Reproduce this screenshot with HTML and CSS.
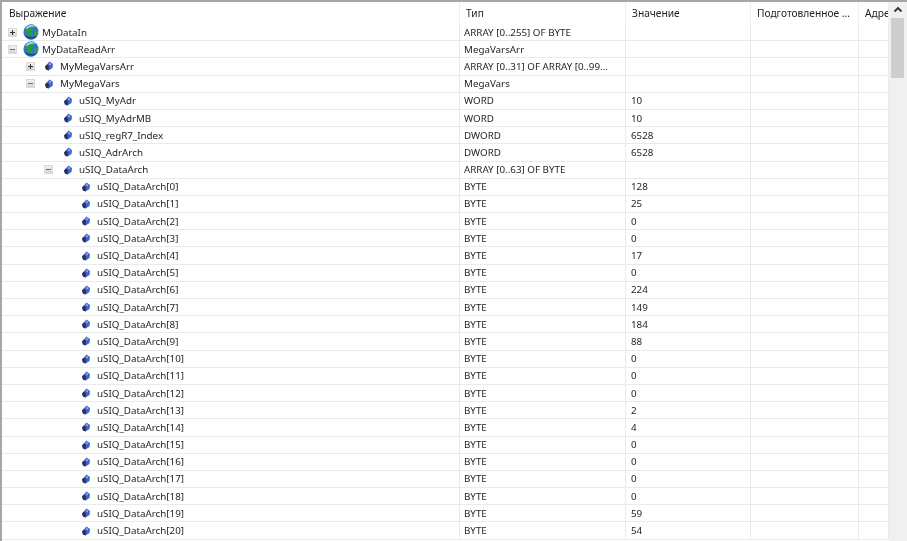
FILE: index.html
```html
<!DOCTYPE html>
<html lang="ru">
<head>
<meta charset="utf-8">
<title>Watch</title>
<link rel="stylesheet" href="styles.css">
</head>
<body>
<svg class="defs" width="0" height="0" aria-hidden="true">
  <defs>
    <symbol id="glob" viewBox="0 0 16 16">
      <ellipse cx="8" cy="8" rx="7.400" ry="7.800" transform="rotate(25 8 8)" fill="#2a78c6"/>
      <path d="M2.500 6 6 2.500 10 2 10.500 5.500 8 7.500 9.500 10.500 7 14 5 11 5 8.500 2.500 8Z" fill="#2f9a44"/>
      <path d="M11 8 14.500 6.500 14.500 10 11.500 12.500Z" fill="#3fa03f"/>
      <path d="M3.500 3C6 .3 11 .2 13.500 3 10.500 1.800 6.500 2.500 3 5.500Z" fill="#a9dcf7"/>
      <path d="M1.200 10.500C3.500 15 11 16.500 14.500 11.500 11 14 5 14 1.200 10.500Z" fill="#0f3c80"/>
    </symbol>
    <symbol id="var" viewBox="0 0 16 16">
      <path d="M4 8.500 8.500 3.500 12 6 11.500 10 7.500 12.500 5 11.500Z" fill="#3f62cc"/>
      <path d="M4 8.500 6 6.500 8 8.500 7.500 12.500 5 11.500Z" fill="#2b3152"/>
      <path d="M8.500 4.500 10.500 6 9.500 7.500 8 6.500Z" fill="#8ea6ea"/>
    </symbol>
  </defs>
</svg>
<main class="watch">
  <div class="table">
    <div class="head">
      <div class="hcell">Выражение</div>
      <div class="hcell">Тип</div>
      <div class="hcell">Значение</div>
      <div class="hcell">Подготовленное ...</div>
      <div class="hcell">Адре</div>
    </div>
    <div class="row"><div class="name l0"><span class="exp plus"></span><svg class="ico"><use href="#glob"/></svg><span>MyDataIn</span></div><div class="cell">ARRAY [0..255] OF BYTE</div><div class="cell"></div><div class="cell"></div><div class="cell"></div></div>
    <div class="row"><div class="name l0"><span class="exp minus"></span><svg class="ico"><use href="#glob"/></svg><span>MyDataReadArr</span></div><div class="cell">MegaVarsArr</div><div class="cell"></div><div class="cell"></div><div class="cell"></div></div>
    <div class="row"><div class="name l1"><span class="exp plus"></span><svg class="ico"><use href="#var"/></svg><span>MyMegaVarsArr</span></div><div class="cell">ARRAY [0..31] OF ARRAY [0..99...</div><div class="cell"></div><div class="cell"></div><div class="cell"></div></div>
    <div class="row"><div class="name l1"><span class="exp minus"></span><svg class="ico"><use href="#var"/></svg><span>MyMegaVars</span></div><div class="cell">MegaVars</div><div class="cell"></div><div class="cell"></div><div class="cell"></div></div>
    <div class="row"><div class="name l2"><span class="exp"></span><svg class="ico"><use href="#var"/></svg><span>uSIQ_MyAdr</span></div><div class="cell">WORD</div><div class="cell">10</div><div class="cell"></div><div class="cell"></div></div>
    <div class="row"><div class="name l2"><span class="exp"></span><svg class="ico"><use href="#var"/></svg><span>uSIQ_MyAdrMB</span></div><div class="cell">WORD</div><div class="cell">10</div><div class="cell"></div><div class="cell"></div></div>
    <div class="row"><div class="name l2"><span class="exp"></span><svg class="ico"><use href="#var"/></svg><span>uSIQ_regR7_Index</span></div><div class="cell">DWORD</div><div class="cell">6528</div><div class="cell"></div><div class="cell"></div></div>
    <div class="row"><div class="name l2"><span class="exp"></span><svg class="ico"><use href="#var"/></svg><span>uSIQ_AdrArch</span></div><div class="cell">DWORD</div><div class="cell">6528</div><div class="cell"></div><div class="cell"></div></div>
    <div class="row"><div class="name l2"><span class="exp minus"></span><svg class="ico"><use href="#var"/></svg><span>uSIQ_DataArch</span></div><div class="cell">ARRAY [0..63] OF BYTE</div><div class="cell"></div><div class="cell"></div><div class="cell"></div></div>
    <div class="row"><div class="name l3"><span class="exp"></span><svg class="ico"><use href="#var"/></svg><span>uSIQ_DataArch[0]</span></div><div class="cell">BYTE</div><div class="cell">128</div><div class="cell"></div><div class="cell"></div></div>
    <div class="row"><div class="name l3"><span class="exp"></span><svg class="ico"><use href="#var"/></svg><span>uSIQ_DataArch[1]</span></div><div class="cell">BYTE</div><div class="cell">25</div><div class="cell"></div><div class="cell"></div></div>
    <div class="row"><div class="name l3"><span class="exp"></span><svg class="ico"><use href="#var"/></svg><span>uSIQ_DataArch[2]</span></div><div class="cell">BYTE</div><div class="cell">0</div><div class="cell"></div><div class="cell"></div></div>
    <div class="row"><div class="name l3"><span class="exp"></span><svg class="ico"><use href="#var"/></svg><span>uSIQ_DataArch[3]</span></div><div class="cell">BYTE</div><div class="cell">0</div><div class="cell"></div><div class="cell"></div></div>
    <div class="row"><div class="name l3"><span class="exp"></span><svg class="ico"><use href="#var"/></svg><span>uSIQ_DataArch[4]</span></div><div class="cell">BYTE</div><div class="cell">17</div><div class="cell"></div><div class="cell"></div></div>
    <div class="row"><div class="name l3"><span class="exp"></span><svg class="ico"><use href="#var"/></svg><span>uSIQ_DataArch[5]</span></div><div class="cell">BYTE</div><div class="cell">0</div><div class="cell"></div><div class="cell"></div></div>
    <div class="row"><div class="name l3"><span class="exp"></span><svg class="ico"><use href="#var"/></svg><span>uSIQ_DataArch[6]</span></div><div class="cell">BYTE</div><div class="cell">224</div><div class="cell"></div><div class="cell"></div></div>
    <div class="row"><div class="name l3"><span class="exp"></span><svg class="ico"><use href="#var"/></svg><span>uSIQ_DataArch[7]</span></div><div class="cell">BYTE</div><div class="cell">149</div><div class="cell"></div><div class="cell"></div></div>
    <div class="row"><div class="name l3"><span class="exp"></span><svg class="ico"><use href="#var"/></svg><span>uSIQ_DataArch[8]</span></div><div class="cell">BYTE</div><div class="cell">184</div><div class="cell"></div><div class="cell"></div></div>
    <div class="row"><div class="name l3"><span class="exp"></span><svg class="ico"><use href="#var"/></svg><span>uSIQ_DataArch[9]</span></div><div class="cell">BYTE</div><div class="cell">88</div><div class="cell"></div><div class="cell"></div></div>
    <div class="row"><div class="name l3"><span class="exp"></span><svg class="ico"><use href="#var"/></svg><span>uSIQ_DataArch[10]</span></div><div class="cell">BYTE</div><div class="cell">0</div><div class="cell"></div><div class="cell"></div></div>
    <div class="row"><div class="name l3"><span class="exp"></span><svg class="ico"><use href="#var"/></svg><span>uSIQ_DataArch[11]</span></div><div class="cell">BYTE</div><div class="cell">0</div><div class="cell"></div><div class="cell"></div></div>
    <div class="row"><div class="name l3"><span class="exp"></span><svg class="ico"><use href="#var"/></svg><span>uSIQ_DataArch[12]</span></div><div class="cell">BYTE</div><div class="cell">0</div><div class="cell"></div><div class="cell"></div></div>
    <div class="row"><div class="name l3"><span class="exp"></span><svg class="ico"><use href="#var"/></svg><span>uSIQ_DataArch[13]</span></div><div class="cell">BYTE</div><div class="cell">2</div><div class="cell"></div><div class="cell"></div></div>
    <div class="row"><div class="name l3"><span class="exp"></span><svg class="ico"><use href="#var"/></svg><span>uSIQ_DataArch[14]</span></div><div class="cell">BYTE</div><div class="cell">4</div><div class="cell"></div><div class="cell"></div></div>
    <div class="row"><div class="name l3"><span class="exp"></span><svg class="ico"><use href="#var"/></svg><span>uSIQ_DataArch[15]</span></div><div class="cell">BYTE</div><div class="cell">0</div><div class="cell"></div><div class="cell"></div></div>
    <div class="row"><div class="name l3"><span class="exp"></span><svg class="ico"><use href="#var"/></svg><span>uSIQ_DataArch[16]</span></div><div class="cell">BYTE</div><div class="cell">0</div><div class="cell"></div><div class="cell"></div></div>
    <div class="row"><div class="name l3"><span class="exp"></span><svg class="ico"><use href="#var"/></svg><span>uSIQ_DataArch[17]</span></div><div class="cell">BYTE</div><div class="cell">0</div><div class="cell"></div><div class="cell"></div></div>
    <div class="row"><div class="name l3"><span class="exp"></span><svg class="ico"><use href="#var"/></svg><span>uSIQ_DataArch[18]</span></div><div class="cell">BYTE</div><div class="cell">0</div><div class="cell"></div><div class="cell"></div></div>
    <div class="row"><div class="name l3"><span class="exp"></span><svg class="ico"><use href="#var"/></svg><span>uSIQ_DataArch[19]</span></div><div class="cell">BYTE</div><div class="cell">59</div><div class="cell"></div><div class="cell"></div></div>
    <div class="row"><div class="name l3"><span class="exp"></span><svg class="ico"><use href="#var"/></svg><span>uSIQ_DataArch[20]</span></div><div class="cell">BYTE</div><div class="cell">54</div><div class="cell"></div><div class="cell"></div></div>
  </div>
  <div class="scrollbar">
    <div class="sb-up"><svg width="18" height="16" viewBox="0 0 18 16"><path d="M5.500 9.500 9 6 12.500 9.500" fill="none" stroke="#303030" stroke-width="1.800"/></svg></div>
    <div class="sb-thumb"></div>
  </div>
</main>
</body>
</html>
```

FILE: styles.css
```css
html, body {
  margin: 0;
  padding: 0;
  height: 100%;
  background: #fff;
  overflow: hidden;
}

.defs {
  position: absolute;
}

.watch {
  display: flex;
  width: 907px;
  height: 541px;
  box-sizing: border-box;
  border-top: 2px solid #a3a5a8;
  border-left: 2px solid #a3a5a8;
  font-family: "Noto Sans", sans-serif;
  font-size: 9.800px;
  color: #1f1f1f;
  overflow: hidden;
  filter: blur(0.45px);
}

.table {
  flex: 1;
  min-width: 0;
}

.head,
.row {
  display: grid;
  grid-template-columns: 458px 166px 125px 108px 30px;
}

.head {
  height: 22px;
}

.hcell {
  display: flex;
  align-items: center;
  padding: 0 0 0 6px;
  border-right: 1px solid #eceef0;
  overflow: hidden;
  white-space: nowrap;
  font-size: 10.200px;
}

.hcell:first-child {
  padding-left: 7px;
}

.row {
  height: 17.200px;
  box-sizing: border-box;
  border-bottom: 1px solid #e8eaec;
}

.row > div {
  display: flex;
  align-items: center;
  white-space: nowrap;
  overflow: hidden;
  border-right: 1px solid #e8eaec;
}

.cell {
  padding-left: 5px;
}

.row > .cell:nth-child(2) {
  padding-left: 4px;
}

.l0 { padding-left: 6px; }
.l1 { padding-left: 24px; }
.l2 { padding-left: 42px; }
.l3 { padding-left: 60px; }

.exp {
  flex: none;
  position: relative;
  width: 9px;
  height: 9px;
  margin-right: 6px;
}

.l2 .exp,
.l3 .exp {
  margin-right: 7px;
}

.plus,
.minus {
  box-sizing: border-box;
  border: 1px solid #d8dadc;
  background: linear-gradient(#f2f2f2, #d4d4d4);
}

.plus::before,
.minus::before {
  content: "";
  position: absolute;
  left: 1px;
  top: 3px;
  width: 5px;
  height: 1px;
  background: #303030;
}

.minus::before {
  background: #707070;
}

.plus::after {
  content: "";
  position: absolute;
  left: 3px;
  top: 1px;
  width: 1px;
  height: 5px;
  background: #303030;
}

.ico {
  flex: none;
  width: 16px;
  height: 16px;
  margin-right: 3px;
}

.scrollbar {
  flex: none;
  width: 18px;
  background: #f0f0f0;
}

.sb-up {
  height: 16px;
}

.sb-up svg {
  display: block;
}

.sb-thumb {
  height: 60px;
  margin: 0 3px 0 2px;
  background: #cdcdcd;
}
```
